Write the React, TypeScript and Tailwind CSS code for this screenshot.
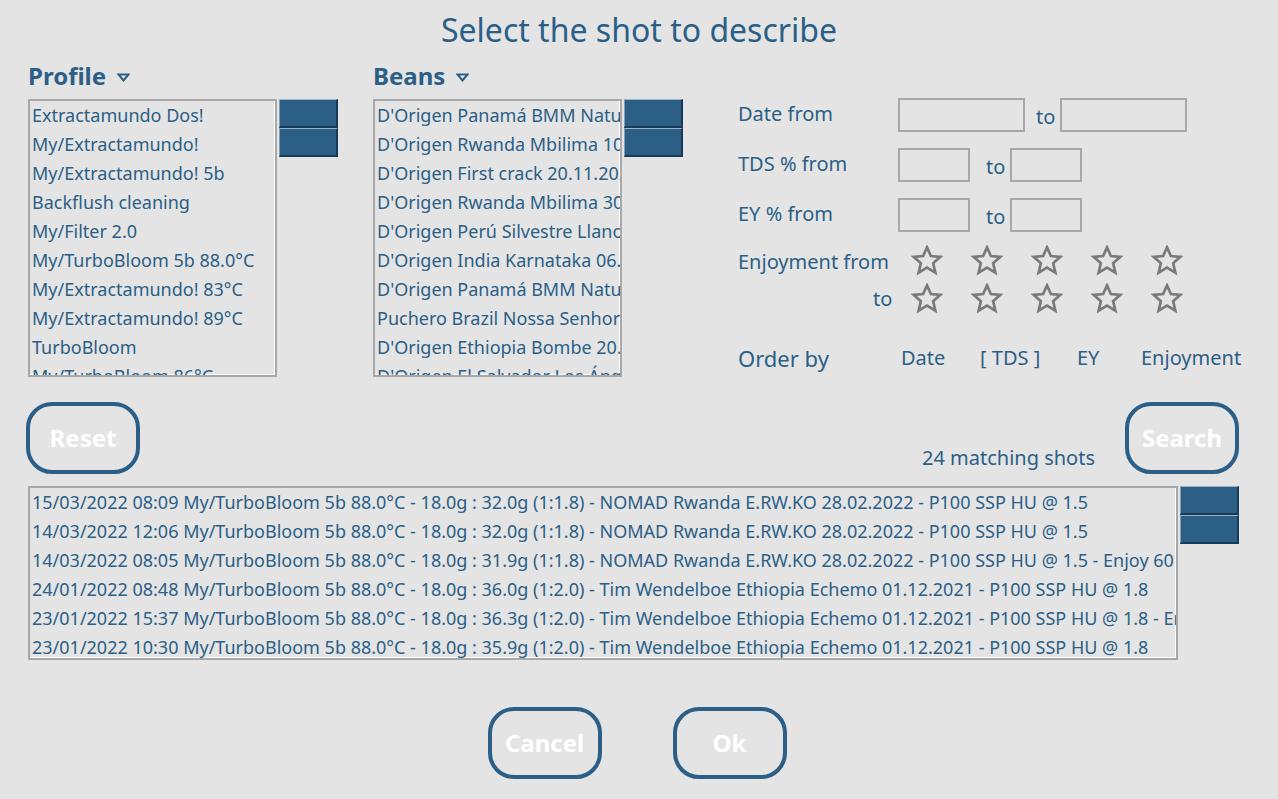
import React from "react";

const profiles = [
  "Extractamundo Dos!",
  "My/Extractamundo!",
  "My/Extractamundo! 5b",
  "Backflush cleaning",
  "My/Filter 2.0",
  "My/TurboBloom 5b 88.0°C",
  "My/Extractamundo! 83°C",
  "My/Extractamundo! 89°C",
  "TurboBloom",
  "My/TurboBloom 86°C",
];

const beans = [
  "D'Origen Panamá BMM Natural 10.12.2021",
  "D'Origen Rwanda Mbilima 10.01.2022",
  "D'Origen First crack 20.11.2021",
  "D'Origen Rwanda Mbilima 30.12.2021",
  "D'Origen Perú Silvestre Llanos 15.11.2021",
  "D'Origen India Karnataka 06.11.2021",
  "D'Origen Panamá BMM Natural 01.11.2021",
  "Puchero Brazil Nossa Senhora 12.10.2021",
  "D'Origen Ethiopia Bombe 20.10.2021",
  "D'Origen El Salvador Los Ángeles 01.10.2021",
];

const shots = [
  "15/03/2022 08:09 My/TurboBloom 5b 88.0°C - 18.0g : 32.0g (1:1.8) - NOMAD Rwanda E.RW.KO 28.02.2022 - P100 SSP HU @ 1.5",
  "14/03/2022 12:06 My/TurboBloom 5b 88.0°C - 18.0g : 32.0g (1:1.8) - NOMAD Rwanda E.RW.KO 28.02.2022 - P100 SSP HU @ 1.5",
  "14/03/2022 08:05 My/TurboBloom 5b 88.0°C - 18.0g : 31.9g (1:1.8) - NOMAD Rwanda E.RW.KO 28.02.2022 - P100 SSP HU @ 1.5 - Enjoy 60",
  "24/01/2022 08:48 My/TurboBloom 5b 88.0°C - 18.0g : 36.0g (1:2.0) - Tim Wendelboe Ethiopia Echemo 01.12.2021 - P100 SSP HU @ 1.8",
  "23/01/2022 15:37 My/TurboBloom 5b 88.0°C - 18.0g : 36.3g (1:2.0) - Tim Wendelboe Ethiopia Echemo 01.12.2021 - P100 SSP HU @ 1.8 - Enjoy 70",
  "23/01/2022 10:30 My/TurboBloom 5b 88.0°C - 18.0g : 35.9g (1:2.0) - Tim Wendelboe Ethiopia Echemo 01.12.2021 - P100 SSP HU @ 1.8",
];

// two little scroll "buttons" to the right of each list
function ScrollButtons() {
  const btn =
    "h-[29px] bg-[#2c5f86] border-t border-l border-t-[#9db4c6] border-l-[#7f9db5] border-b-2 border-r-2 border-b-[#173a56] border-r-[#173a56]";
  return (
    <div className="flex flex-col w-[59px] ml-[2px]">
      <div className={btn} />
      <div className={btn} />
    </div>
  );
}

function ListBox({ items, className }: { items: string[]; className: string }) {
  return (
    <div className={`border-2 border-[#a8a8a8] overflow-hidden shadow-[inset_-1px_-1px_0_#ffffff] ${className}`}>
      {items.map((it) => (
        <div key={it} className="h-[29px] leading-[29px] pl-[2px] whitespace-nowrap text-[18px]">
          {it}
        </div>
      ))}
    </div>
  );
}

function Caret() {
  return (
    <svg width="13" height="9" viewBox="0 0 13 9" className="ml-[11px] mt-[2px]">
      <polygon points="1.5,1.5 11.5,1.5 6.5,7.5" fill="none" stroke="#2b5f88" strokeWidth="2" strokeLinejoin="miter" />
    </svg>
  );
}

function Star() {
  return (
    <svg width="32" height="32" viewBox="0 0 24 24">
      <polygon
        points="12,1.8 14.9,8.3 22,8.9 16.6,13.6 18.3,20.8 12,17 5.7,20.8 7.4,13.6 2,8.9 9.1,8.3"
        fill="none"
        stroke="#7a7a7a"
        strokeWidth="2"
        strokeLinejoin="miter"
      />
    </svg>
  );
}

function Stars() {
  return (
    <div className="flex gap-[28px]">
      {[0, 1, 2, 3, 4].map((i) => (
        <Star key={i} />
      ))}
    </div>
  );
}

function Field({ w }: { w: string }) {
  return <div className={`h-[34px] border-2 border-[#a8a8a8] ${w}`} />;
}

function OutlineButton({ label, className = "" }: { label: string; className?: string }) {
  return (
    <button
      type="button"
      className={`w-[114px] h-[72px] rounded-[26px] border-4 border-[#2b5f88] text-white font-bold text-[24px] ${className}`}
    >
      {label}
    </button>
  );
}

export default function App() {
  return (
    <div className="w-[1278px] h-[799px] bg-[#e4e4e4] text-[#2b5f88] font-['Noto_Sans',sans-serif] overflow-hidden">
      {/* Title */}
      <div className="h-[62px] pt-[10px] text-center text-[32px] leading-[40px]">Select the shot to describe</div>

      {/* Filters */}
      <div className="flex pl-[28px] h-[315px]">
        <div className="w-[345px]">
          <div className="flex items-center h-[32px] -mt-[2px] text-[24px] font-bold">
            Profile
            <Caret />
          </div>
          <div className="flex mt-[7px]">
            <ListBox items={profiles} className="w-[249px] h-[278px]" />
            <ScrollButtons />
          </div>
        </div>

        <div className="w-[365px]">
          <div className="flex items-center h-[32px] -mt-[2px] text-[24px] font-bold">
            Beans
            <Caret />
          </div>
          <div className="flex mt-[7px]">
            <ListBox items={beans} className="w-[249px] h-[278px]" />
            <ScrollButtons />
          </div>
        </div>

        <div className="flex flex-col pt-[36px] text-[20px]">
          <div className="flex items-center h-[34px]">
            <div className="w-[160px] -mt-[3px]">Date from</div>
            <Field w="w-[127px]" />
            <div className="ml-[11px] mr-[5px] pt-[3px]">to</div>
            <Field w="w-[127px]" />
          </div>
          <div className="flex items-center h-[34px] mt-[16px]">
            <div className="w-[160px] -mt-[3px]">TDS % from</div>
            <Field w="w-[72px]" />
            <div className="ml-[16px] mr-[5px] pt-[3px]">to</div>
            <Field w="w-[72px]" />
          </div>
          <div className="flex items-center h-[34px] mt-[16px]">
            <div className="w-[160px] -mt-[3px]">EY % from</div>
            <Field w="w-[72px]" />
            <div className="ml-[16px] mr-[5px] pt-[3px]">to</div>
            <Field w="w-[72px]" />
          </div>
          <div className="flex items-center h-[32px] mt-[13px]">
            <div className="w-[173px] pt-[2px]">Enjoyment from</div>
            <Stars />
          </div>
          <div className="flex items-center h-[32px] mt-[6px]">
            <div className="w-[173px] pl-[135px]">to</div>
            <Stars />
          </div>
          <div className="flex items-center h-[30px] mt-[28px]">
            <div className="w-[163px] text-[22px]">Order by</div>
            <div className="w-[79px]">Date</div>
            <div className="w-[97px]">[ TDS ]</div>
            <div className="w-[64px]">EY</div>
            <div>Enjoyment</div>
          </div>
        </div>
      </div>

      {/* Search row */}
      <div className="flex items-start mt-[25px] pl-[26px] h-[84px]">
        <OutlineButton label="Reset" />
        <div className="flex-1 flex justify-end items-end h-[72px] pr-[29px] text-[20px]">
          <span className="pb-[1px] mr-[1px]">24 matching shots</span>
        </div>
        <OutlineButton label="Search" className="mr-[39px]" />
      </div>

      {/* Shot list */}
      <div className="flex pl-[28px]">
        <ListBox items={shots} className="w-[1150px] h-[174px]" />
        <ScrollButtons />
      </div>

      {/* Bottom buttons */}
      <div className="flex justify-center gap-[71px] mt-[47px] pr-[4px]">
        <OutlineButton label="Cancel" />
        <OutlineButton label="Ok" />
      </div>
    </div>
  );
}
